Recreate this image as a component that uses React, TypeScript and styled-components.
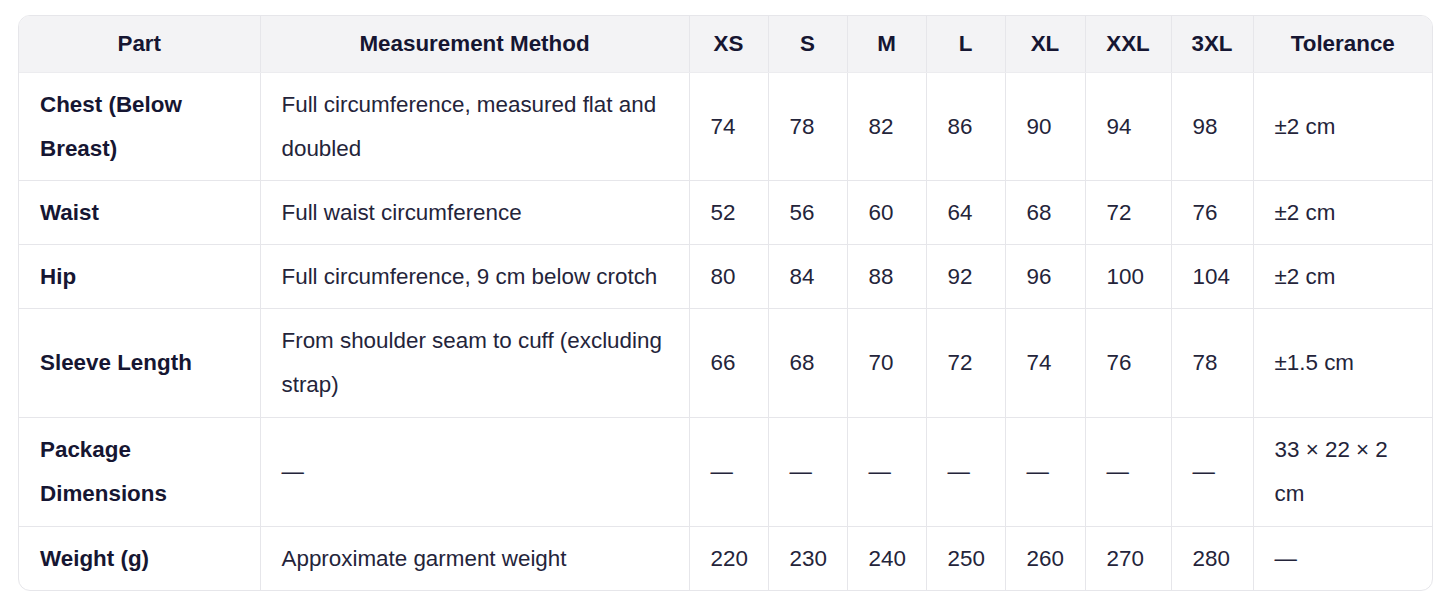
import React from 'react';
import styled, { createGlobalStyle } from 'styled-components';

interface SizeRow {
  part: string,
  method: string,
  values: Array<string>,
  tolerance: string,
}

const sizes = ['XS', 'S', 'M', 'L', 'XL', 'XXL', '3XL'];

// column widths measured from the screenshot
const widths = [241, 429, 79, 79, 79, 79, 80, 86, 82, 179];

const rows: Array<SizeRow> = [
  { part: 'Chest (Below Breast)', method: 'Full circumference, measured flat and doubled', values: ['74', '78', '82', '86', '90', '94', '98'], tolerance: '±2 cm' },
  { part: 'Waist', method: 'Full waist circumference', values: ['52', '56', '60', '64', '68', '72', '76'], tolerance: '±2 cm' },
  { part: 'Hip', method: 'Full circumference, 9 cm below crotch', values: ['80', '84', '88', '92', '96', '100', '104'], tolerance: '±2 cm' },
  { part: 'Sleeve Length', method: 'From shoulder seam to cuff (excluding strap)', values: ['66', '68', '70', '72', '74', '76', '78'], tolerance: '±1.5 cm' },
  { part: 'Package Dimensions', method: '—', values: ['—', '—', '—', '—', '—', '—', '—'], tolerance: '33 × 22 × 2 cm' },
  { part: 'Weight (g)', method: 'Approximate garment weight', values: ['220', '230', '240', '250', '260', '270', '280'], tolerance: '—' },
];

const App = () => {
  return (
    <>
      <GlobalStyle />
      <Wrap>
        <Table>
          <colgroup>
            {widths.map((w, i) => <col key={i} style={{ width: w }} />)}
          </colgroup>
          <thead>
            <tr>
              <Th>Part</Th>
              <Th>Measurement Method</Th>
              {sizes.map((s) => <Th key={s}>{s}</Th>)}
              <Th>Tolerance</Th>
            </tr>
          </thead>
          <tbody>
            {rows.map((row) => (
              <tr key={row.part}>
                <Td bold>{row.part}</Td>
                <Td>{row.method}</Td>
                {row.values.map((v, i) => <Td key={i}>{v}</Td>)}
                <Td>{row.tolerance}</Td>
              </tr>
            ))}
          </tbody>
        </Table>
      </Wrap>
    </>
  )
};

const GlobalStyle = createGlobalStyle`
  body {
    margin: 0;
    background: #ffffff;
    font-family: "Liberation Sans", Arial, sans-serif;
  }
`

const Wrap = styled.div`
  margin: 15px 0 0 18px;
  width: 1415px;
  border: 1px solid #e6e6ea;
  border-radius: 12px;
  overflow: hidden;
  box-sizing: border-box;
`

const Table = styled.table`
  width: 100%;
  border-collapse: collapse;
  table-layout: fixed;
  font-size: 22.4px;
`

const Th = styled.th`
  background: #f3f3f5;
  color: #161632;
  font-weight: 700;
  text-align: center;
  height: 56px;
  padding: 0 8px;
  line-height: 26px;
  border-left: 1px solid #e6e6ea;
  border-bottom: 1px solid #ececef;
  &:first-child { border-left: none; }
`

const Td = styled.td<{ bold?: boolean }>`
  color: ${(p) => (p.bold ? '#161632' : '#24243a')};
  font-weight: ${(p) => (p.bold ? 700 : 400)};
  text-align: left;
  vertical-align: middle;
  padding: 10px 20px 9px 21px;
  line-height: 44px;
  border-left: 1px solid #e6e6ea;
  border-top: 1px solid #e6e6ea;
  &:first-child { border-left: none; }
  tr:nth-child(n+4) > & { padding-bottom: 10px; }
  tr:last-child > & { padding-bottom: 9px; }
`

export default App;
